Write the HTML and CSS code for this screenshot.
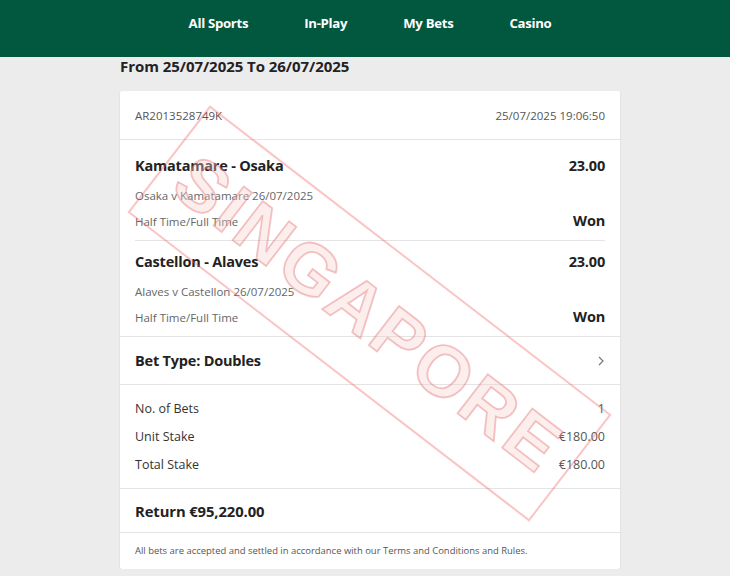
FILE: index.html
```html
<!DOCTYPE html>
<html lang="en">
<head>
    <meta charset="UTF-8">
    <meta name="viewport" content="width=device-width, initial-scale=1.0">
    <title>My Bets</title>
    <link rel="stylesheet" href="styles.css">
</head>
<body>
    <!-- Top navigation -->
    <header class="topbar">
        <nav class="nav">
            <a href="#">All Sports</a>
            <a href="#">In-Play</a>
            <a href="#">My Bets</a>
            <a href="#">Casino</a>
        </nav>
    </header>

    <div class="container">
        <h1 class="range">From 25/07/2025 To 26/07/2025</h1>

        <div class="bet-card">
            <div class="bet-ref">
                <span>AR2013528749K</span>
                <span>25/07/2025 19:06:50</span>
            </div>

            <!-- Selections -->
            <div class="selections">
                <div class="selection">
                    <div class="sel-line">
                        <span class="sel-title">Kamatamare - Osaka</span>
                        <span class="sel-odds">23.00</span>
                    </div>
                    <div class="sel-event">Osaka v Kamatamare 26/07/2025</div>
                    <div class="sel-line sel-market">
                        <span>Half Time/Full Time</span>
                        <span class="sel-result">Won</span>
                    </div>
                </div>
                <div class="selection">
                    <div class="sel-line">
                        <span class="sel-title">Castellon - Alaves</span>
                        <span class="sel-odds">23.00</span>
                    </div>
                    <div class="sel-event">Alaves v Castellon 26/07/2025</div>
                    <div class="sel-line sel-market">
                        <span>Half Time/Full Time</span>
                        <span class="sel-result">Won</span>
                    </div>
                </div>
            </div>

            <div class="bet-type">
                <span>Bet Type: Doubles</span>
                <svg width="8" height="12" viewBox="0 0 8 12"><polyline points="2,2 6,6 2,10" fill="none" stroke="#777" stroke-width="1.2"/></svg>
            </div>

            <div class="stakes">
                <div class="stake-row"><span>No. of Bets</span><span class="stake-val">1</span></div>
                <div class="stake-row"><span>Unit Stake</span><span class="stake-val">€180.00</span></div>
                <div class="stake-row"><span>Total Stake</span><span class="stake-val">€180.00</span></div>
            </div>

            <div class="bet-return">Return €95,220.00</div>

            <p class="disclaimer">All bets are accepted and settled in accordance with our Terms and Conditions and Rules.</p>

            <!-- Watermark stamp -->
            <div class="stamp"><span>SINGAPORE</span></div>
        </div>
    </div>
</body>
</html>
```

FILE: styles.css
```css
body {
    margin: 0;
    padding: 0 0 0 10px;
    background-color: #ececed;
    font-family: "Open Sans", "Noto Sans", sans-serif;
    color: #222;
}
.topbar {
    background-color: #02573f;
    height: 57px;
    margin-left: -10px;
}
.nav {
    display: flex;
    justify-content: center;
    gap: 56px;
    padding: 14px 0 0 10px;
}
.nav a {
    color: #fff;
    text-decoration: none;
    font-weight: 700;
    font-size: 13.2px;
    line-height: 18px;
    letter-spacing: -0.3px;
}
.container {
    width: 500px;
    margin: 0 auto;
}
.range {
    font-size: 15px;
    font-weight: 700;
    line-height: 18px;
    margin: 0 0 16px;
    letter-spacing: -0.05px;
}
.bet-card {
    position: relative;
    background-color: #fff;
    border-radius: 2px;
    box-shadow: 0 1px 2px rgba(0, 0, 0, 0.12);
    overflow: hidden;
}
.bet-ref {
    display: flex;
    justify-content: space-between;
    height: 48px;
    align-items: center;
    padding: 0 15px;
    font-size: 11.5px;
    color: #555;
    border-bottom: 1px solid #e4e4e4;
}
.selections {
    padding: 0 15px;
    border-bottom: 1px solid #e4e4e4;
}
.selection {
    padding: 11px 0 10px;
}
.selection:first-child {
    padding-top: 16px;
    border-bottom: 1px solid #e4e4e4;
}
.sel-line {
    display: flex;
    justify-content: space-between;
    align-items: center;
}
.sel-title, .sel-odds, .sel-result {
    font-weight: 700;
    font-size: 14.5px;
    line-height: 20px;
    letter-spacing: -0.2px;
}
.sel-event {
    margin-top: 12px;
    font-size: 11.5px;
    line-height: 16px;
    color: #666;
}
.sel-market {
    margin-top: 10px;
    height: 16px;
    font-size: 11.5px;
    line-height: 16px;
    color: #666;
}
.sel-market .sel-result {
    color: #222;
    line-height: 16px;
    margin-top: -2px;
}
.bet-type {
    display: flex;
    justify-content: space-between;
    align-items: center;
    height: 47px;
    padding: 0 15px;
    font-weight: 700;
    font-size: 14.5px;
    letter-spacing: -0.2px;
    border-bottom: 1px solid #e4e4e4;
}
.stakes {
    padding: 14px 15px 13px;
    display: flex;
    flex-direction: column;
    gap: 8px;
    border-bottom: 1px solid #e4e4e4;
}
.stake-row {
    display: flex;
    justify-content: space-between;
    font-size: 12.5px;
    line-height: 20px;
    color: #333;
}
.stake-val {
    color: #555;
}
.bet-return {
    padding: 12px 15px 11px;
    font-weight: 700;
    font-size: 14.8px;
    line-height: 20px;
    letter-spacing: -0.1px;
    border-bottom: 1px solid #e4e4e4;
}
.disclaimer {
    margin: 0;
    padding: 11px 15px;
    font-size: 9.45px;
    line-height: 14px;
    color: #555;
}
.stamp {
    position: absolute;
    left: -4px;
    top: 155px;
    width: 503px;
    height: 131px;
    border: 2px solid rgba(238, 90, 90, 0.35);
    transform: rotate(37.6deg);
    display: flex;
    align-items: center;
    justify-content: center;
    pointer-events: none;
}
.stamp span {
    font-family: "Liberation Sans", Arial, sans-serif;
    font-weight: 700;
    font-size: 72px;
    letter-spacing: 4px;
    color: rgba(248, 205, 205, 0.35);
    -webkit-text-stroke: 1.8px rgba(225, 110, 110, 0.4);
}
```
